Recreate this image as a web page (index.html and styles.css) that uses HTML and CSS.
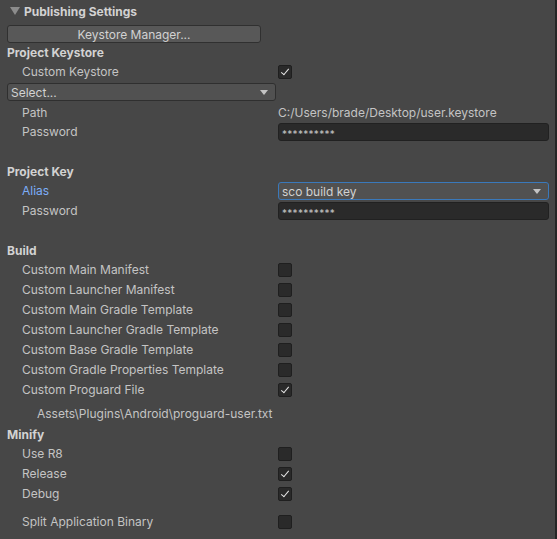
FILE: index.html
```html
<!DOCTYPE html>
<html lang="en">
<head>
    <meta charset="UTF-8">
    <title>Publishing Settings</title>
    <link rel="stylesheet" href="styles.css">
</head>
<body>
    <div class="inspector">
        <div class="foldout">
            <span class="fold-arrow"></span>
            <span>Publishing Settings</span>
        </div>
        <button class="button keystore-btn">Keystore Manager...</button>

        <div class="title">Project Keystore</div>
        <div class="row">
            <span class="label">Custom Keystore</span>
            <span class="check on"></span>
        </div>
        <div class="popup select">
            <span>Select...</span>
            <span class="popup-arrow"></span>
        </div>
        <div class="row path-row">
            <span class="label">Path</span>
            <span class="value">C:/Users/brade/Desktop/user.keystore</span>
        </div>
        <div class="row">
            <span class="label">Password</span>
            <span class="field">**********</span>
        </div>

        <div class="title spaced">Project Key</div>
        <div class="row">
            <span class="label active">Alias</span>
            <div class="popup focused">
                <span>sco build key</span>
                <span class="popup-arrow"></span>
            </div>
        </div>
        <div class="row">
            <span class="label">Password</span>
            <span class="field">**********</span>
        </div>

        <div class="title spaced">Build</div>
        <div class="row"><span class="label">Custom Main Manifest</span><span class="check"></span></div>
        <div class="row"><span class="label">Custom Launcher Manifest</span><span class="check"></span></div>
        <div class="row"><span class="label">Custom Main Gradle Template</span><span class="check"></span></div>
        <div class="row"><span class="label">Custom Launcher Gradle Template</span><span class="check"></span></div>
        <div class="row"><span class="label">Custom Base Gradle Template</span><span class="check"></span></div>
        <div class="row"><span class="label">Custom Gradle Properties Template</span><span class="check"></span></div>
        <div class="row"><span class="label">Custom Proguard File</span><span class="check on"></span></div>
        <div class="row asset-path">Assets\Plugins\Android\proguard-user.txt</div>

        <div class="title minify">Minify</div>
        <div class="row"><span class="label">Use R8</span><span class="check"></span></div>
        <div class="row"><span class="label">Release</span><span class="check on"></span></div>
        <div class="row"><span class="label">Debug</span><span class="check on"></span></div>

        <div class="row split"><span class="label">Split Application Binary</span><span class="check"></span></div>
    </div>
</body>
</html>
```

FILE: styles.css
```css
* {
    margin: 0;
    padding: 0;
    box-sizing: border-box;
}

body {
    background: #474747;
    font-family: Inter, "Noto Sans", sans-serif;
    font-size: 12px;
    color: #c4c4c4;
    overflow: hidden;
}

.inspector {
    width: 557px;
    height: 539px;
    padding: 0 6px 0 7px;
    border-right: 2px solid #262626;
}

.foldout {
    display: flex;
    align-items: center;
    height: 22px;
    padding-left: 3px;
    font-weight: 700;
    color: #d2d2d2;
}

.fold-arrow {
    width: 0;
    height: 0;
    border-left: 5px solid transparent;
    border-right: 5px solid transparent;
    border-top: 8px solid #8c8c8c;
    margin-right: 4px;
}

.button {
    display: block;
    width: 254px;
    height: 18px;
    margin-top: 3px;
    background: #585858;
    border: 1px solid #303030;
    border-radius: 3px;
    font: inherit;
    color: #d2d2d2;
}

.title {
    display: flex;
    align-items: center;
    height: 19px;
    padding-bottom: 1px;
    font-weight: 700;
    color: #d2d2d2;
}

.title.spaced {
    margin-top: 20px;
}

.title.minify {
    margin-top: 2px;
}

.row {
    display: flex;
    align-items: center;
    height: 20px;
    padding-left: 15px;
}

.label {
    width: 256px;
    flex-shrink: 0;
    margin-top: -1px;
}

.label.active {
    color: #7caef8;
}

.value {
    flex: 1;
    margin-top: -1px;
}

.path-row {
    height: 19px;
    margin-top: 2px;
}

.check {
    position: relative;
    width: 14px;
    height: 14px;
    background: #2a2a2a;
    border: 1px solid #1f1f1f;
    border-radius: 2px;
}

.check.on::after {
    content: "";
    position: absolute;
    left: 4px;
    top: 1px;
    width: 3px;
    height: 7px;
    border-right: 1.5px solid #e6e6e6;
    border-bottom: 1.5px solid #e6e6e6;
    transform: rotate(40deg);
}

.popup {
    display: flex;
    align-items: center;
    justify-content: space-between;
    height: 18px;
    padding: 0 7px 0 3px;
    background: #515151;
    border: 1px solid #2f2f2f;
    border-radius: 3px;
    color: #d2d2d2;
}

.popup.select {
    width: 269px;
    margin-top: 1px;
}

.popup.focused {
    flex: 1;
    border-color: #3a79bb;
}

.popup-arrow {
    width: 0;
    height: 0;
    border-left: 4px solid transparent;
    border-right: 4px solid transparent;
    border-top: 5px solid #c4c4c4;
}

.field {
    flex: 1;
    height: 18px;
    display: flex;
    align-items: center;
    padding: 3px 3px 0;
    background: #2a2a2a;
    border: 1px solid #212121;
    border-radius: 3px;
    font-size: 10px;
    letter-spacing: 0.3px;
    color: #c4c4c4;
}

.asset-path {
    margin-top: 3px;
    padding-left: 30px;
}

.split {
    margin-top: 8px;
}
```
